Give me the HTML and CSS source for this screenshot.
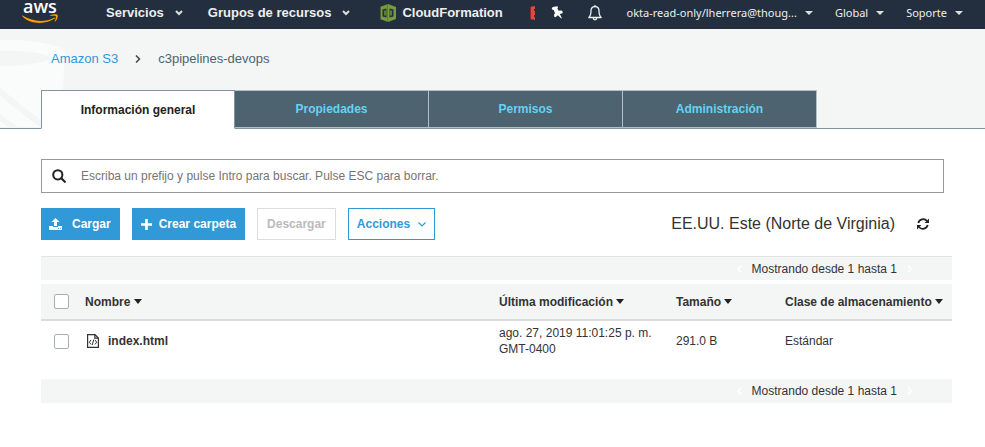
FILE: index.html
```html
<!DOCTYPE html>
<html lang="es">
<head>
<meta charset="utf-8">
<meta name="viewport" content="width=device-width, initial-scale=1">
<title>Amazon S3</title>
<link rel="stylesheet" href="styles.css">
</head>
<body>
<header class="topbar">
  <a class="logo" href="#">
    <span class="logo-word">aws</span>
    <svg class="logo-smile" viewBox="0 0 37 9" width="37" height="9" aria-hidden="true"><path d="M.6 1.6C11 8.3 23 8.4 32 3.7c1-.5 1.6.3.8.9C23.500 10.800 8.500 10.600.3 2.300c-.5-.5-.1-1 .3-.7z" fill="#f90"/><path d="M28.500 1.100c2-1 5.800-1.200 6.900-.4.9.8.1 5-2.200 6.800-.3.3-.7.1-.5-.3.6-1.400 1.600-4.100 1.100-4.900-.5-.7-3.400-.6-5-.4-.4.100-.7-.5-.3-.8z" fill="#f90"/></svg>
  </a>
  <nav class="menu">
    <button class="menu-item" type="button">Servicios
      <svg width="8" height="6" viewBox="0 0 8 6" aria-hidden="true"><path d="M1 1l3 3 3-3" fill="none" stroke="#ddd" stroke-width="2"/></svg></button>
    <button class="menu-item" type="button">Grupos de recursos
      <svg width="8" height="6" viewBox="0 0 8 6" aria-hidden="true"><path d="M1 1l3 3 3-3" fill="none" stroke="#ddd" stroke-width="2"/></svg></button>
  </nav>
  <a class="shortcut" href="#">
    <svg width="16" height="18" viewBox="0 0 16 18" aria-hidden="true"><path d="M8 0L16 3v12l-8 3-8-3V3z" fill="#759c3e"/><path d="M0 3l1-1v14l-1-1zM7.500 0H8v18h-.5z" fill="#4b612c"/><path d="M2.500 5.500L6.500 4.500v9l-4-1zM9.500 4.500l4 1v7l-4 1z" fill="#232f3e"/><path d="M4 6.500h2.500v5H4zM9.500 6.500H12v5H9.500z" fill="#5b7c31"/></svg>
    CloudFormation
  </a>
  <div class="tools">
    <svg width="6" height="14" viewBox="0 0 6 14" aria-hidden="true"><path d="M0 1l5-1v3H4v2h1v4H4v2h1v3l-5-1z" fill="#e2493a"/><path d="M0 1l1-.3v12.600L0 13z" fill="#8c2b24"/></svg>
    <button class="tool" type="button" aria-label="Fijar accesos directos"><svg width="12" height="13" viewBox="0 0 12 13" aria-hidden="true"><path d="M1.800 1L6.500.2 7 1.400l-.7.9 1.400 2.400 3-.1 1.100 1.500-.4 1.100-2.600.9 2 3.900-.5.500-3.400-3.300L4.400 11.300l-1-.3L3 8.500l1-1.300L2.700 4 1.500 3.800.7 2.500z" fill="#fff"/></svg></button>
    <button class="tool bell" type="button" aria-label="Notificaciones"><svg width="14" height="16" viewBox="0 0 14 16" aria-hidden="true"><path d="M7 1.500c-2.800 0-4 2-4 4.300 0 3.700-.8 5.500-2.200 6.700h12.400C11.800 11.300 11 9.500 11 5.800c0-2.300-1.200-4.300-4-4.300zM7 0v1.500M5.300 13c0 2.400 3.400 2.400 3.400 0" fill="none" stroke="#eee" stroke-width="1.300" stroke-linejoin="round"/></svg></button>
  </div>
  <nav class="account">
    <button class="account-item" type="button">okta-read-only/lherrera@thoug... <span class="caret"></span></button>
    <button class="account-item" type="button">Global <span class="caret"></span></button>
    <button class="account-item" type="button">Soporte <span class="caret"></span></button>
  </nav>
</header>

<section class="masthead">
  <svg class="bucket" width="66" height="98" viewBox="0 0 66 98" aria-hidden="true"><path d="M0 11c30-1 58 4 65 11L61 98H0z" fill="#fafbfb"/><path d="M0 22c25-1 45 2 52 7-8 5-28 8-52 8z" fill="#f4f6f6"/><path d="M0 59l48 38H38L0 67zM0 85l18 13H8L0 92z" fill="#f4f6f6"/></svg>
  <nav class="crumbs" aria-label="Ruta">
    <a href="#">Amazon S3</a>
    <svg width="6" height="8" viewBox="0 0 6 8" aria-hidden="true"><path d="M1 .5L4.500 4 1 7.500" fill="none" stroke="#444" stroke-width="1.500"/></svg>
    <span>c3pipelines-devops</span>
  </nav>
  <div class="tabs" role="tablist">
    <button class="tab active" type="button" role="tab" aria-selected="true">Información general</button>
    <button class="tab" type="button" role="tab">Propiedades</button>
    <button class="tab" type="button" role="tab">Permisos</button>
    <button class="tab" type="button" role="tab">Administración</button>
  </div>
</section>

<main class="content">
  <label class="search">
    <svg width="14" height="14" viewBox="0 0 14 14" aria-hidden="true"><circle cx="5.800" cy="5.800" r="4.600" fill="none" stroke="#222" stroke-width="2"/><path d="M9.300 9.300l3.500 3.500" stroke="#222" stroke-width="2.200" stroke-linecap="round"/></svg>
    <input type="text" aria-label="Buscar" placeholder="Escriba un prefijo y pulse Intro para buscar. Pulse ESC para borrar.">
  </label>

  <div class="actions">
    <button class="btn primary upload" type="button"><svg width="13" height="12" viewBox="0 0 13 12" aria-hidden="true"><path d="M6.500 0l4 4H8v4H5V4H2.500zM0 8h4v1h5V8h4v4H0z" fill="#fff"/><path d="M9 10.300h1M11 10.300h1" stroke="#3199d7" stroke-width="1"/></svg>Cargar</button>
    <button class="btn primary" type="button"><svg width="11" height="11" viewBox="0 0 11 11" aria-hidden="true"><path d="M5.500 0v11M0 5.500h11" stroke="#fff" stroke-width="2.600"/></svg>Crear carpeta</button>
    <button class="btn" type="button" disabled>Descargar</button>
    <button class="btn outline" type="button">Acciones<svg width="8" height="5" viewBox="0 0 8 5" aria-hidden="true"><path d="M.5.5L4 4 7.500.5" fill="none" stroke="#3199d7" stroke-width="1.200"/></svg></button>
    <span class="region">EE.UU. Este (Norte de Virginia)</span>
    <button class="refresh" type="button" aria-label="Actualizar"><svg width="12" height="12" viewBox="0 0 12 12" aria-hidden="true"><path d="M1.300 5A5 5 0 0 1 10 3M10.700 7A5 5 0 0 1 2 9" fill="none" stroke="#222" stroke-width="1.800"/><path d="M12 .6V5H7.600zM0 11.400V7h4.400z" fill="#222"/></svg></button>
  </div>

  <div class="pager top">
    <svg width="5" height="8" viewBox="0 0 5 8" aria-hidden="true"><path d="M4 .5L1 4l3 3.500" fill="none" stroke="#fff" stroke-width="1.500"/></svg>
    <span>Mostrando desde 1 hasta 1</span>
    <svg width="5" height="8" viewBox="0 0 5 8" aria-hidden="true"><path d="M1 .5L4 4 1 7.500" fill="none" stroke="#fff" stroke-width="1.500"/></svg>
  </div>

  <table class="objects">
    <colgroup><col class="c-check"><col><col class="c-date"><col class="c-size"><col class="c-class"></colgroup>
    <thead>
      <tr>
        <th class="pick"><input type="checkbox" aria-label="Seleccionar todo"></th>
        <th>Nombre <span class="sort"></span></th>
        <th>Última modificación <span class="sort"></span></th>
        <th>Tamaño <span class="sort"></span></th>
        <th>Clase de almacenamiento <span class="sort"></span></th>
      </tr>
    </thead>
    <tbody>
      <tr>
        <td class="pick"><input type="checkbox" aria-label="Seleccionar index.html"></td>
        <td><a class="file" href="#"><svg width="12" height="14" viewBox="0 0 12 14" aria-hidden="true"><path d="M.6.600h7.400l3.400 3.400v9.400H.6zM7.800.6v3.600h3.600" fill="none" stroke="#333" stroke-width="1.200"/><path d="M4 6L2.300 8.200 4 10.400M8 6l1.700 2.200L8 10.400M6.700 5.500l-1.400 5.500" fill="none" stroke="#333" stroke-width="1"/></svg>index.html</a></td>
        <td>ago. 27, 2019 11:01:25 p. m.<br>GMT-0400</td>
        <td>291.0 B</td>
        <td>Estándar</td>
      </tr>
    </tbody>
  </table>

  <div class="pager">
    <svg width="5" height="8" viewBox="0 0 5 8" aria-hidden="true"><path d="M4 .5L1 4l3 3.500" fill="none" stroke="#fff" stroke-width="1.500"/></svg>
    <span>Mostrando desde 1 hasta 1</span>
    <svg width="5" height="8" viewBox="0 0 5 8" aria-hidden="true"><path d="M1 .5L4 4 1 7.500" fill="none" stroke="#fff" stroke-width="1.500"/></svg>
  </div>
</main>
</body>
</html>
```

FILE: styles.css
```css
* {
  box-sizing: border-box;
}

body {
  margin: 0;
  background: #fff;
  color: #333;
  font: 12px/16px "Liberation Sans", Arial, sans-serif;
}

button {
  padding: 0;
  border: 0;
  background: none;
  color: inherit;
  font: inherit;
  white-space: nowrap;
}

a {
  color: inherit;
  text-decoration: none;
}

svg {
  flex: none;
  display: block;
}

.topbar {
  display: flex;
  align-items: center;
  height: 29px;
  padding: 0 22px 4px 22px;
  background: #232f3e;
  color: #eee;
  font-size: 13px;
}

.logo {
  width: 84px;
  padding-bottom: 2px;
  color: #fff;
}

.logo-word {
  display: block;
  padding: 0 0 3px 1px;
  font: 18px/10px "Open Sans", sans-serif;
  font-weight: 600;
}

.menu {
  display: flex;
  gap: 25px;
  font-weight: bold;
}

.menu-item,
.account-item {
  display: flex;
  align-items: center;
  gap: 11px;
}

.shortcut {
  display: flex;
  align-items: center;
  gap: 6px;
  margin-left: 30px;
  font-weight: bold;
}

.tools {
  display: flex;
  align-items: center;
  margin-left: 27px;
}

.tool {
  margin-left: 15px;
}

.bell {
  margin-left: 25px;
}

.account {
  display: flex;
  gap: 22px;
  margin-left: auto;
  font: 11px/16px "Noto Sans", sans-serif;
}

.account-item {
  gap: 8px;
}

.caret,
.sort {
  display: inline-block;
  border: solid transparent;
  border-width: 4px 4px 0;
  border-top-color: #ddd;
}

.sort {
  border-width: 5px 4px 0;
  border-top-color: #222;
  vertical-align: 2px;
}

.masthead {
  position: relative;
  padding: 22px 41px 0;
  border-bottom: 1px solid #7f93a1;
  background: #f4f6f6;
}

.bucket {
  position: absolute;
  top: 0;
  left: 0;
}

.crumbs {
  position: relative;
  display: flex;
  align-items: center;
  gap: 17px;
  padding-left: 10px;
  color: #4d6370;
  font-size: 13px;
}

.crumbs a {
  color: #3199d7;
}

.tabs {
  position: relative;
  display: flex;
  margin: 23px 0 -1px;
}

.tab {
  flex: 0 1 194px;
  height: 38px;
  border: solid #b4c0c7;
  border-width: 1px 1px 1px 0;
  background: #4d6370;
  color: #64d2f3;
  font-weight: bold;
}

.tab.active {
  height: 39px;
  border: 1px solid #7f93a1;
  border-bottom-color: #fff;
  background: #fff;
  color: #222;
}

.content {
  padding: 30px 33px 0 41px;
}

.search {
  display: flex;
  align-items: center;
  gap: 15px;
  height: 34px;
  margin-right: 8px;
  padding: 0 10px;
  border: 1px solid #999;
}

.search input {
  flex: 1;
  padding: 0;
  border: 0;
  outline: 0;
  color: #333;
  font: inherit;
}

.search input::placeholder {
  color: #757575;
}

.actions {
  display: flex;
  align-items: center;
  gap: 12px;
  margin: 15px 0 16px;
}

.btn {
  display: flex;
  align-items: center;
  gap: 7px;
  height: 32px;
  padding: 0 8px;
  border: 1px solid #ddd;
  font-weight: bold;
}

.btn:disabled {
  padding: 0 9px;
  color: #bbb;
}

.btn.primary {
  border-color: #3199d7;
  background: #3199d7;
  color: #fff;
}

.btn.upload {
  gap: 10px;
  padding-left: 7px;
}

.btn.outline {
  gap: 8px;
  border-color: #3199d7;
  color: #3199d7;
}

.region {
  margin-left: auto;
  color: #333;
  font-size: 16px;
  line-height: 20px;
}

.refresh {
  margin: 0 23px 0 10px;
}

.pager {
  display: flex;
  align-items: center;
  justify-content: flex-end;
  gap: 10px;
  height: 24px;
  padding-right: 40px;
  background: #f4f6f6;
}

.pager.top {
  border-top: 1px solid #e2e4e4;
}

.objects {
  width: 100%;
  margin: 4px 0 18px;
  border-collapse: collapse;
  table-layout: fixed;
}

.c-check {
  width: 44px;
}

.c-date {
  width: 177px;
}

.c-size {
  width: 109px;
}

.c-class {
  width: 167px;
}

.objects th,
.objects td {
  padding: 0;
  text-align: left;
}

.objects th {
  height: 36px;
  border-bottom: 2px solid #dadddd;
  background: #f4f6f6;
  white-space: nowrap;
}

.objects td {
  height: 41px;
}

.objects .pick {
  padding-left: 13px;
}

.pick input {
  appearance: none;
  display: block;
  width: 15px;
  height: 15px;
  margin: 0;
  border: 1px solid #a5b0b5;
  border-radius: 2px;
  background: #fff;
}

.file {
  display: flex;
  align-items: center;
  gap: 9px;
  padding-left: 2px;
  font-weight: bold;
}
```
